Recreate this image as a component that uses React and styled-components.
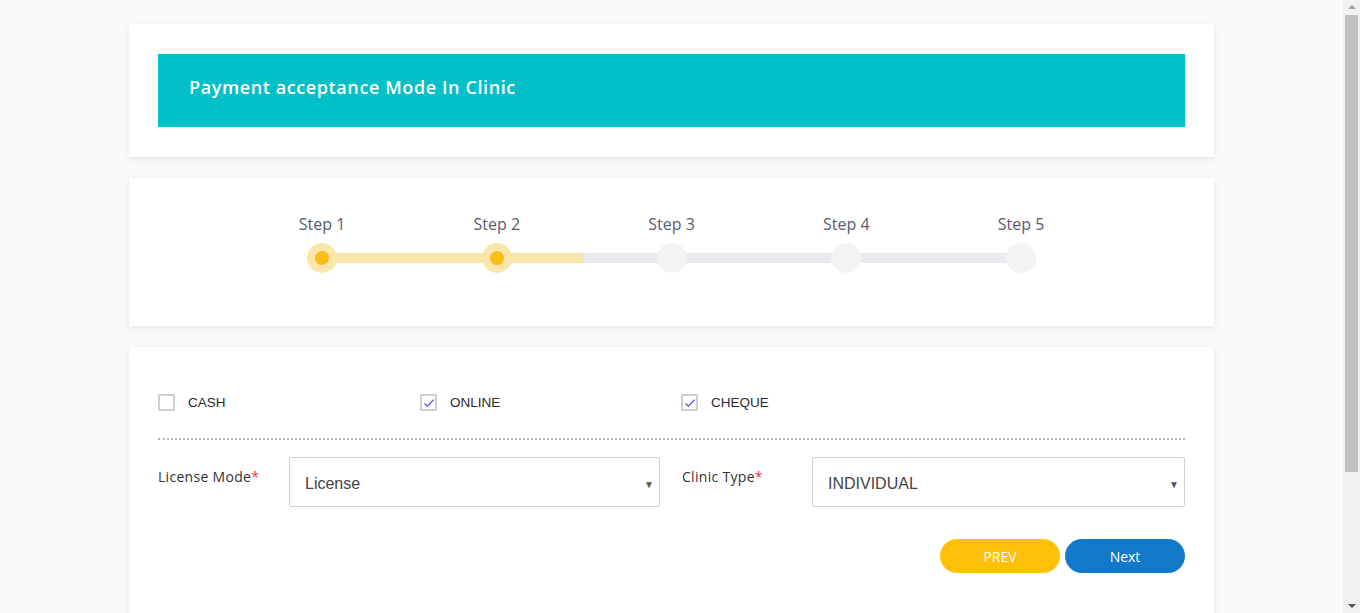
import React from "react";
import styled, { createGlobalStyle } from "styled-components";

const Global = createGlobalStyle`
  html, body { margin: 0; padding: 0; height: 100%; overflow: hidden; }
  body { background: #f9f9f9; font-family: "Open Sans", "Liberation Sans", sans-serif; }
  * { box-sizing: border-box; }
`;

const Shell = styled.div`
  height: 100vh;
  display: flex;
  background: #f9f9f9;
`;

const Main = styled.div`
  flex: 1;
  overflow: hidden;
`;

const ScrollBar = styled.div`
  width: 17px;
  flex-shrink: 0;
  background: #f1f1f1;
  display: flex;
  flex-direction: column;
  align-items: center;
`;

const Arrow = styled.div`
  width: 17px;
  height: 14px;
  display: flex;
  align-items: center;
  justify-content: center;
  &::before {
    content: "";
    border-left: 4px solid transparent;
    border-right: 4px solid transparent;
    ${(p) =>
      p.$down
        ? "border-top: 4px solid #505050;"
        : "border-bottom: 4px solid #a3a3a3;"}
  }
`;

const Thumb = styled.div`
  width: 13px;
  height: 457px;
  margin-top: 1px;
  background: #c1c1c1;
`;

const Spacer = styled.div`
  flex: 1;
`;

const Page = styled.main`
  width: 1085px;
  margin: 0 auto;
  padding: 24px 0 40px;
  display: flex;
  flex-direction: column;
  gap: 21px;
`;

const Card = styled.section`
  background: #fff;
  box-shadow: 0 2px 6px rgba(0, 0, 0, 0.08);
  padding: ${(p) => p.$pad || "30px 29px"};
  min-height: ${(p) => p.$minH || "auto"};
`;

const Banner = styled.div`
  background: #01c0c8;
  height: 73px;
  display: flex;
  align-items: center;
  padding-left: 31px;
  padding-bottom: 8px;
  color: #fff;
  font-family: "Open Sans", sans-serif;
  font-weight: 600;
  font-size: 18px;
  letter-spacing: 0.6px;
`;

const Stepper = styled.div`
  display: flex;
  justify-content: center;
`;

const Step = styled.div`
  width: 174.75px;
  display: flex;
  flex-direction: column;
  align-items: center;
  gap: 8px;
  position: relative;
  &::after {
    content: "";
    display: ${(p) => (p.$last ? "none" : "block")};
    position: absolute;
    left: 50%;
    width: 100%;
    top: 40px;
    height: 10px;
    z-index: 0;
    background: linear-gradient(to right, #fbe6a9 ${(p) => p.$fill * 100}%, #e9ebee ${(p) => p.$fill * 100}%);
  }
`;

const StepLabel = styled.div`
  font-family: "Open Sans", sans-serif;
  font-size: 16px;
  color: #585b6c;
  line-height: 22px;
`;

const Dot = styled.div`
  width: 30px;
  height: 30px;
  border-radius: 50%;
  background: ${(p) => (p.$active ? "#fbe6a9" : "#f3f3f3")};
  position: relative;
  z-index: 1;
  display: flex;
  align-items: center;
  justify-content: center;
  &::before {
    content: "";
    display: ${(p) => (p.$active ? "block" : "none")};
    width: 14px;
    height: 14px;
    border-radius: 50%;
    background: #fbbd18;
  }
`;

const CheckRow = styled.div`
  display: grid;
  grid-template-columns: 262px 261px 262px;
  padding-bottom: 27px;
  border-bottom: 2px dotted #b5b5b5;
`;

const CheckItem = styled.label`
  display: flex;
  align-items: center;
  gap: 13px;
  font-family: "Liberation Sans", Arial, sans-serif;
  font-size: 13.5px;
  color: #2b2b2b;
`;

const Box = styled.span`
  width: 17px;
  height: 17px;
  border: 2px solid #cfcfcf;
  border-radius: 1px;
  display: flex;
  align-items: center;
  justify-content: center;
`;

const FormRow = styled.div`
  display: grid;
  grid-template-columns: 502px 503px;
  gap: 22px;
  margin-top: 17px;
`;

const Field = styled.div`
  display: flex;
  align-items: flex-start;
`;

const Label = styled.div`
  width: ${(p) => p.$w}px;
  flex-shrink: 0;
  padding-top: 10px;
  font-family: "Open Sans", sans-serif;
  font-size: 14px;
  letter-spacing: 0.3px;
  color: #333;
  & > span { color: #f0344d; }
`;

const Select = styled.div`
  flex: 1;
  height: 50px;
  border: 1px solid #cfcfcf;
  border-radius: 2px;
  display: flex;
  align-items: center;
  justify-content: space-between;
  padding: 4px 5px 0 15px;
  font-family: "Liberation Sans", Arial, sans-serif;
  font-size: 16px;
  color: #444;
  & > i { font-style: normal; font-size: 10px; color: #555; }
`;

const Actions = styled.div`
  display: flex;
  justify-content: flex-end;
  gap: 5px;
  margin-top: 32px;
`;

const Btn = styled.button`
  width: 120px;
  height: 34px;
  border: 0;
  border-radius: 17px;
  background: ${(p) => p.$bg};
  color: #fff;
  font-family: "Open Sans", sans-serif;
  font-size: 14px;
  font-weight: 500;
  cursor: pointer;
`;

const Check = () => (
  <svg width="12" height="10" viewBox="0 0 12 10">
    <path d="M1.5 5.5 L4.5 8.2 L10.5 1.8" fill="none" stroke="#7b5ff0" strokeWidth="1.6" />
  </svg>
);

const steps = [
  { label: "Step 1", active: true, fill: 1 },
  { label: "Step 2", active: true, fill: 0.5 },
  { label: "Step 3", active: false, fill: 0 },
  { label: "Step 4", active: false, fill: 0 },
  { label: "Step 5", active: false, fill: 0 },
];

const modes = [
  { label: "CASH", checked: false },
  { label: "ONLINE", checked: true },
  { label: "CHEQUE", checked: true },
];

export default function App() {
  return (
    <>
      <Global />
      <Shell>
        <Main>
          <Page>
            <Card>
              <Banner>Payment acceptance Mode In Clinic</Banner>
            </Card>
            <Card $pad="35px 29px 53px">
              <Stepper>
                {steps.map((s, i) => (
                  <Step key={s.label} $fill={s.fill} $last={i === steps.length - 1}>
                    <StepLabel>{s.label}</StepLabel>
                    <Dot $active={s.active} />
                  </Step>
                ))}
              </Stepper>
            </Card>
            <Card $pad="47px 29px 40px" $minH="410px">
              <CheckRow>
                {modes.map((m) => (
                  <CheckItem key={m.label}>
                    <Box>{m.checked && <Check />}</Box>
                    {m.label}
                  </CheckItem>
                ))}
              </CheckRow>
              <FormRow>
                <Field>
                  <Label $w={131}>License Mode<span>*</span></Label>
                  <Select>License<i>▼</i></Select>
                </Field>
                <Field>
                  <Label $w={130}>Clinic Type<span>*</span></Label>
                  <Select>INDIVIDUAL<i>▼</i></Select>
                </Field>
              </FormRow>
              <Actions>
                <Btn $bg="#fec107">PREV</Btn>
                <Btn $bg="#1279c9">Next</Btn>
              </Actions>
            </Card>
          </Page>
        </Main>
        <ScrollBar>
          <Arrow />
          <Thumb />
          <Spacer />
          <Arrow $down />
        </ScrollBar>
      </Shell>
    </>
  );
}
